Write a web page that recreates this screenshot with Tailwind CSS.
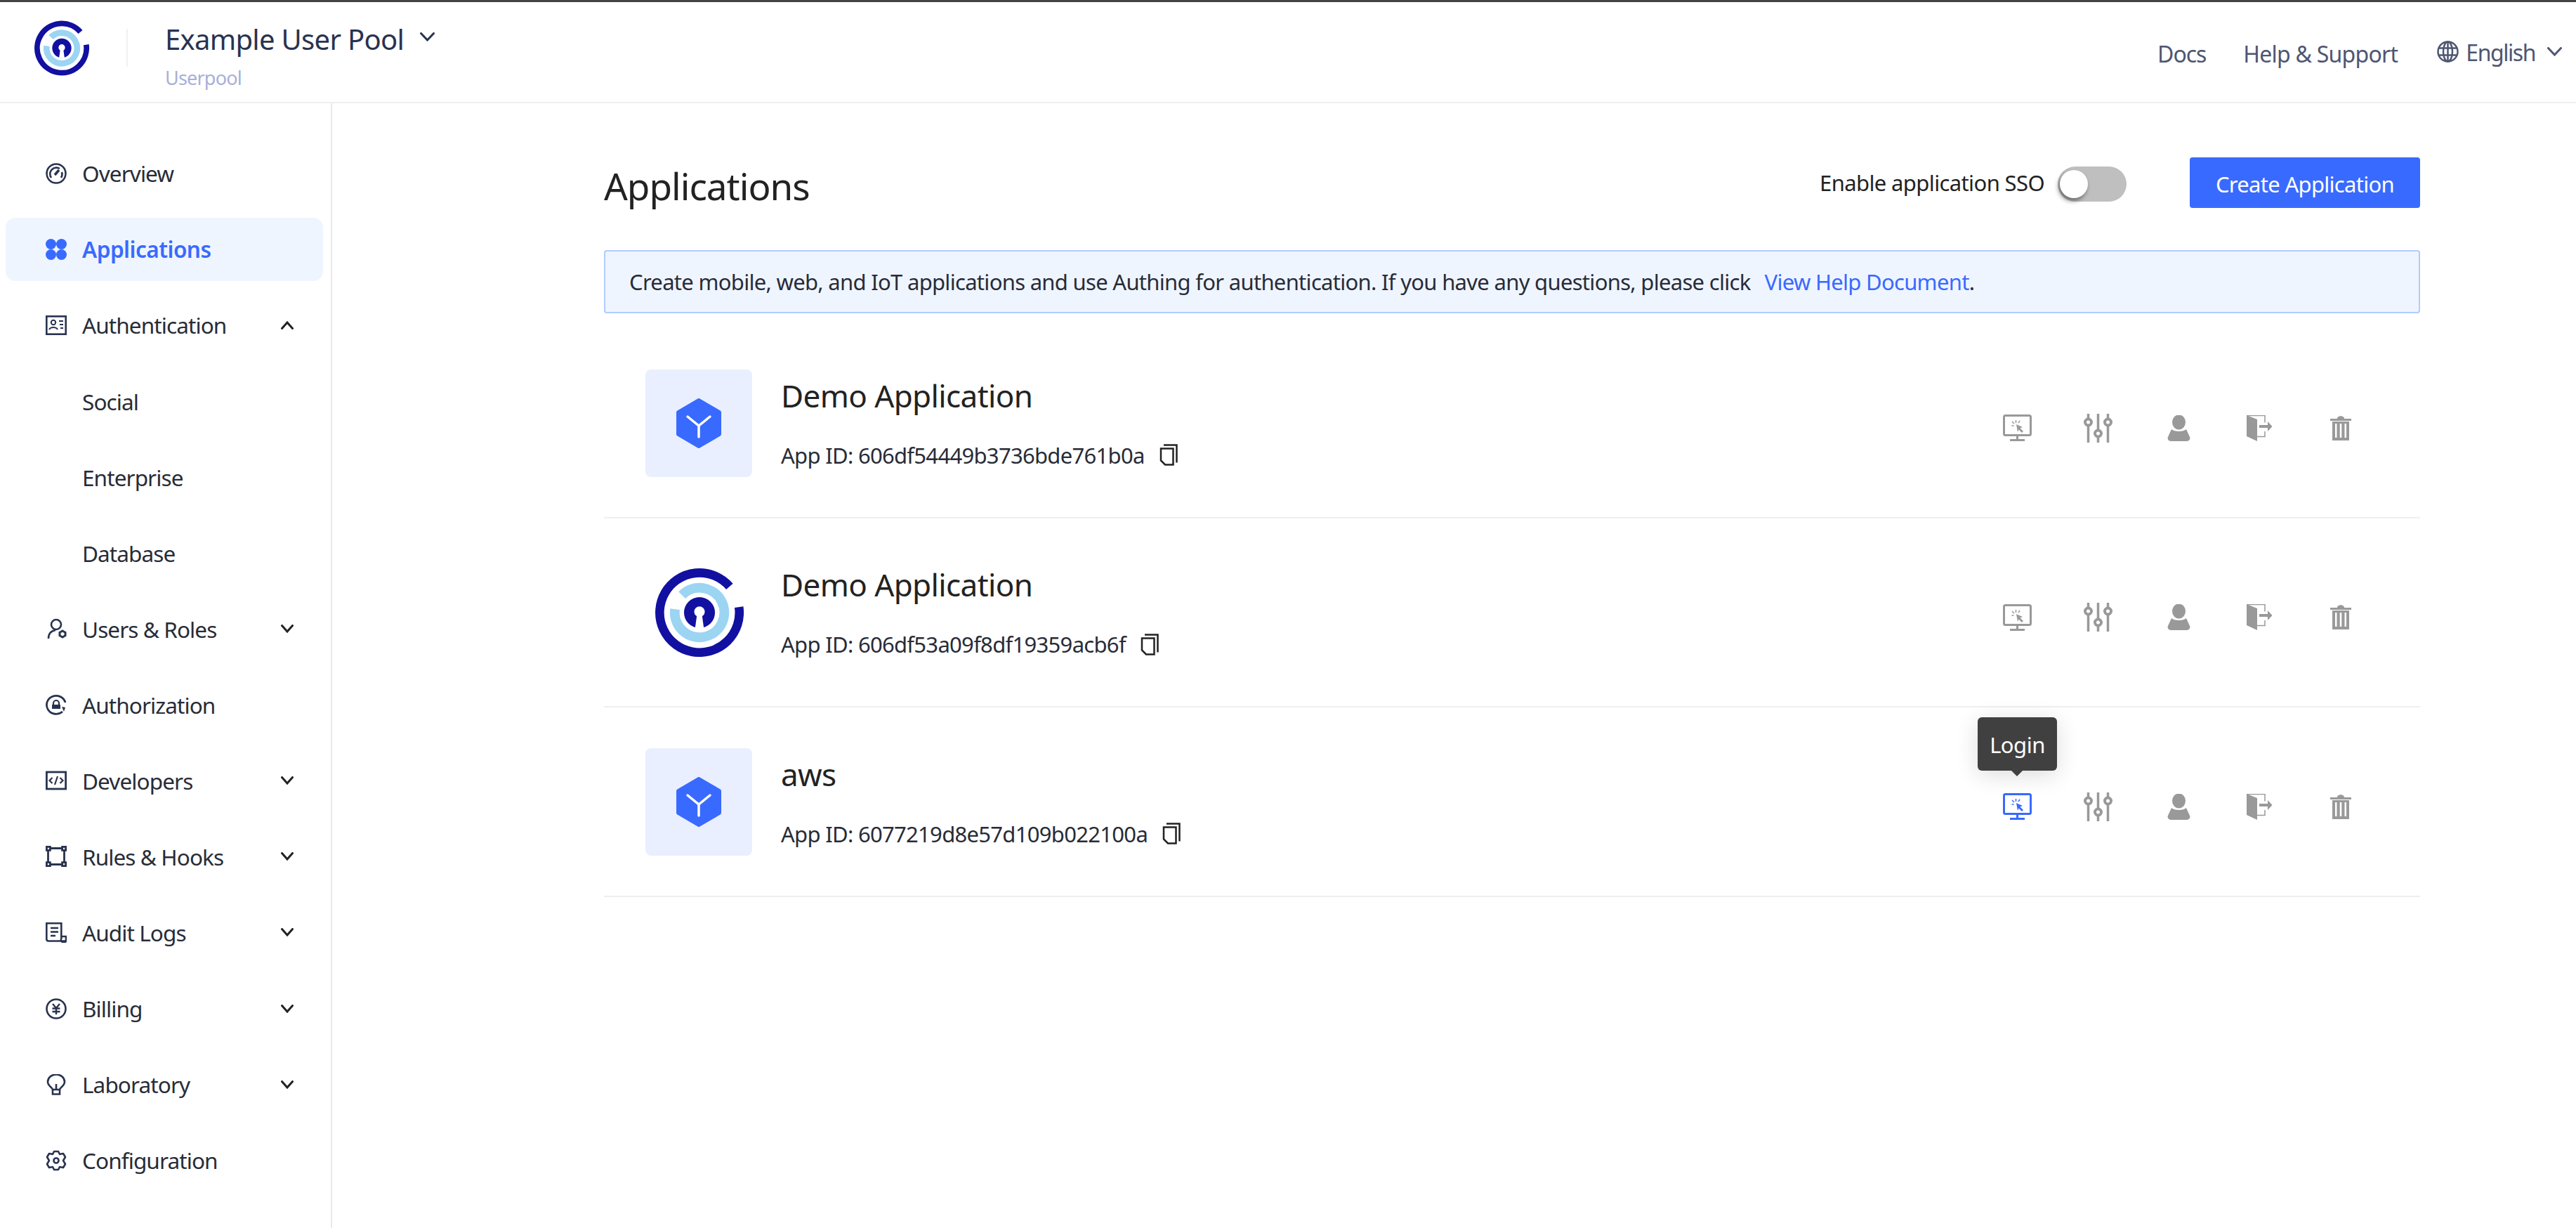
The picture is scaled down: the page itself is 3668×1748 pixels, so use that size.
<!DOCTYPE html>
<html lang="en"><head><meta charset="utf-8">
<script src="https://cdn.jsdelivr.net/npm/@tailwindcss/browser@4"></script>
<title>Applications</title></head>
<body class="bg-white">
<div class="w-[3668px] h-[1748px] flex flex-col overflow-hidden font-['Noto_Sans','Open_Sans',sans-serif] font-[380] text-[#282c37] border-t-[3px] border-[#444]">
  <header class="h-[144px] shrink-0 border-b-[2px] border-[#efefef] flex items-center">
    <svg class="ml-[49px] w-[78px] h-[79px] mt-[-12px] shrink-0" viewBox="0 0 100 100" fill="none"><path d="M84 20.5A45 45 0 1 0 94.6 43.7" stroke="#1210a0" stroke-width="10"/><path d="M30.2 30.2A28 28 0 1 1 22.3 46.1" stroke="#9bd5f2" stroke-width="11"/><circle cx="50" cy="50" r="17.5" fill="#1210a0"/><circle cx="50" cy="49" r="6" fill="#fff"/><path d="M47.5 50h5L55 68H45z" fill="#fff"/></svg>
    <div class="w-[2px] h-[54px] bg-[#f1f1f1] ml-[53px] mt-[-12px]"></div>
    <div class="ml-[53px] flex flex-col mt-[9px]">
      <div class="flex items-center h-[58px]"><span class="text-[40px] leading-[58px] tracking-[-0.7px] text-[#293350]">Example User Pool</span>
        <svg class="ml-[23px] mt-[-8px] w-[21px] h-[13px]" viewBox="0 0 21 13" fill="none"><path d="M1.5 1.5l9 9.5 9-9.5" stroke="#293350" stroke-width="3" stroke-linecap="round"/></svg></div>
      <span class="mt-[7px] text-[27px] leading-[38px] tracking-[-0.8px] text-[#a7b0d8]">Userpool</span>
    </div>
    <div class="ml-auto flex items-center mt-[6px] text-[32px] text-[#4e5672]">
      <span class="tracking-[-1.06px]">Docs</span>
      <span class="ml-[53px] tracking-[-0.75px]">Help &amp; Support</span>
      <svg class="ml-[56px] w-[31px] h-[31px] mt-[-8px]" viewBox="0 0 31 31" fill="none" stroke="#4e5672" stroke-width="2.5"><circle cx="15.5" cy="15.5" r="14"/><ellipse cx="15.5" cy="15.5" rx="6.5" ry="14"/><path d="M2 10.5h27M2 20.5h27M15.5 1.5v28"/></svg>
      <span class="ml-[10px] tracking-[-1.46px] mt-[-4px]">English</span>
      <svg class="ml-[17px] mr-[20px] w-[21px] h-[13px] mt-[-8px]" viewBox="0 0 21 13" fill="none"><path d="M1.5 1.5l9 9.5 9-9.5" stroke="#4e5672" stroke-width="3" stroke-linecap="round"/></svg>
    </div>
  </header>
  <div class="flex flex-1 min-h-0">
    <nav class="w-[473px] shrink-0 border-r-[2px] border-[#e8e9f0] pt-[55px] pl-[8px] pr-[11px] text-[31.5px] tracking-[-0.9px]">
      <a class="flex items-center h-[90px] mb-[18.05px] pl-[57px]"><svg class="w-[30px] h-[30px] shrink-0" viewBox="0 0 30 30" fill="none" stroke="#293350" stroke-width="2.6"><circle cx="15" cy="15" r="13.5"/><path d="M8 21a9 9 0 0 1 12-13"/><path d="M23 13a9 9 0 0 1-1 8"/><path d="M13 17l6-7" stroke-width="3.5"/></svg><span class="ml-[22px]">Overview</span></a>
      <a class="flex items-center h-[90px] mb-[18.05px] pl-[57px] rounded-[14px] bg-[#eff5ff] text-[#396aff] font-semibold tracking-[-0.5px]"><svg class="w-[30px] h-[30px] shrink-0" viewBox="0 0 30 30" fill="#396aff"><ellipse cx="7.5" cy="7.5" rx="7.5" ry="7.5"/><ellipse cx="22.5" cy="7.5" rx="7.5" ry="7.5"/><ellipse cx="7.5" cy="22.5" rx="7.5" ry="7.5"/><ellipse cx="22.5" cy="22.5" rx="7.5" ry="7.5"/></svg><span class="ml-[22px]">Applications</span></a>
      <a class="flex items-center h-[90px] mb-[18.05px] pl-[57px]"><svg class="w-[30px] h-[30px] shrink-0" viewBox="0 0 30 30" fill="none" stroke="#293350" stroke-width="2.6"><rect x="1.3" y="2.3" width="27.4" height="25.4"/><circle cx="11" cy="11" r="3.2" stroke-width="2"/><path d="M5 21c2-4 10-4 12 0M19 9h6M20 14h5M21 19h4" stroke-width="2"/></svg><span class="ml-[22px]">Authentication</span><svg class="ml-auto mr-[42px] w-[18px] h-[12px]" viewBox="0 0 18 12" fill="none"><path d="M1.5 10.5L9 2l7.5 8.5" stroke="#222" stroke-width="3" stroke-linecap="round"/></svg></a>
      <a class="flex items-center h-[90px] mb-[18.05px] pl-[109px]">Social</a>
      <a class="flex items-center h-[90px] mb-[18.05px] pl-[109px]">Enterprise</a>
      <a class="flex items-center h-[90px] mb-[18.05px] pl-[109px]">Database</a>
      <a class="flex items-center h-[90px] mb-[18.05px] pl-[57px]"><svg class="w-[30px] h-[30px] shrink-0" viewBox="0 0 30 30" fill="none" stroke="#293350" stroke-width="2.6"><circle cx="15" cy="9" r="7"/><path d="M4 29c0-7 4-11 10-12"/><path d="M24 18l4 2.3v4.4L24 27l-4-2.3v-4.4z" stroke-width="3"/></svg><span class="ml-[22px]">Users &amp; Roles</span><svg class="ml-auto mr-[42px] w-[18px] h-[12px]" viewBox="0 0 18 12" fill="none"><path d="M1.5 1.5L9 10l7.5-8.5" stroke="#222" stroke-width="3" stroke-linecap="round"/></svg></a>
      <a class="flex items-center h-[90px] mb-[18.05px] pl-[57px]"><svg class="w-[30px] h-[30px] shrink-0" viewBox="0 0 30 30" fill="none" stroke="#293350" stroke-width="2.8"><path d="M28 12A13.5 13 0 1 0 24 25"/><path d="M11 15v-2a4 4 0 0 1 8 0v2" stroke-width="2.2"/><rect x="9" y="15" width="12" height="6" fill="#293350" stroke="none"/><path d="M23 18l5 1-2 6z" fill="#293350" stroke="none"/></svg><span class="ml-[22px]">Authorization</span></a>
      <a class="flex items-center h-[90px] mb-[18.05px] pl-[57px]"><svg class="w-[30px] h-[30px] shrink-0" viewBox="0 0 30 30" fill="none" stroke="#293350" stroke-width="2.8"><rect x="1.4" y="3" width="27.2" height="24"/><path d="M9.5 11L5.5 15l4 4M20.5 11l4 4-4 4M17 9l-4 12" stroke-width="2.2"/></svg><span class="ml-[22px]">Developers</span><svg class="ml-auto mr-[42px] w-[18px] h-[12px]" viewBox="0 0 18 12" fill="none"><path d="M1.5 1.5L9 10l7.5-8.5" stroke="#222" stroke-width="3" stroke-linecap="round"/></svg></a>
      <a class="flex items-center h-[90px] mb-[18.05px] pl-[57px]"><svg class="w-[30px] h-[30px] shrink-0" viewBox="0 0 30 30" fill="none" stroke="#293350" stroke-width="2.8"><path d="M3.5 7v16M26.5 7v16M7 3.5h16M7 26.5h16"/><rect x="1.4" y="1.4" width="5" height="5"/><rect x="23.6" y="1.4" width="5" height="5"/><rect x="1.4" y="23.6" width="5" height="5"/><rect x="23.6" y="23.6" width="5" height="5"/></svg><span class="ml-[22px]">Rules &amp; Hooks</span><svg class="ml-auto mr-[42px] w-[18px] h-[12px]" viewBox="0 0 18 12" fill="none"><path d="M1.5 1.5L9 10l7.5-8.5" stroke="#222" stroke-width="3" stroke-linecap="round"/></svg></a>
      <a class="flex items-center h-[90px] mb-[18.05px] pl-[57px]"><svg class="w-[30px] h-[30px] shrink-0" viewBox="0 0 30 30" fill="none" stroke="#293350" stroke-width="2.6"><path d="M29 27.5H4a2.7 2.7 0 0 1-2.7-2.7V2.3h21V24a3.5 3.5 0 0 0 6.7 3.5V21h-6.7"/><path d="M7 9h11M7 14.5h11M7 20h7"/></svg><span class="ml-[22px]">Audit Logs</span><svg class="ml-auto mr-[42px] w-[18px] h-[12px]" viewBox="0 0 18 12" fill="none"><path d="M1.5 1.5L9 10l7.5-8.5" stroke="#222" stroke-width="3" stroke-linecap="round"/></svg></a>
      <a class="flex items-center h-[90px] mb-[18.05px] pl-[57px]"><svg class="w-[30px] h-[30px] shrink-0" viewBox="0 0 30 30" fill="none" stroke="#293350" stroke-width="2.6"><circle cx="15" cy="15" r="13.5"/><path d="M10 8l5 6 5-6M9.5 14.5h11M9.5 19h11M15 14v9" stroke-width="2.4"/></svg><span class="ml-[22px]">Billing</span><svg class="ml-auto mr-[42px] w-[18px] h-[12px]" viewBox="0 0 18 12" fill="none"><path d="M1.5 1.5L9 10l7.5-8.5" stroke="#222" stroke-width="3" stroke-linecap="round"/></svg></a>
      <a class="flex items-center h-[90px] mb-[18.05px] pl-[57px]"><svg class="w-[30px] h-[30px] shrink-0" viewBox="0 0 30 30" fill="none" stroke="#293350" stroke-width="2.6"><path d="M10 22c0-3-7-5-7-11a12 10.500 0 0 1 24 0c0 6-7 8-7 11z"/><path d="M10 22v6.500h10V22M15 14v8"/></svg><span class="ml-[22px]">Laboratory</span><svg class="ml-auto mr-[42px] w-[18px] h-[12px]" viewBox="0 0 18 12" fill="none"><path d="M1.500 1.500L9 10l7.500-8.500" stroke="#222" stroke-width="3" stroke-linecap="round"/></svg></a>
      <a class="flex items-center h-[90px] pl-[57px]"><svg class="w-[30px] h-[30px] shrink-0" viewBox="0 0 30 30" fill="none" stroke="#293350" stroke-width="2.600"><path d="M12 2l6 0 2 4 5-1 3 5-3 5 3 5-3 5-5-1-2 4h-6l-2-4-5 1-3-5 3-5-3-5 3-5 5 1z" stroke-linejoin="round"/><circle cx="15" cy="15" r="3.500"/></svg><span class="ml-[22px]">Configuration</span></a>
    </nav>
    <main class="flex-1 min-w-0 pl-[387px] pr-[222px]">
      <div class="flex items-center h-[72px] mt-[77px]">
        <h1 class="text-[53px] font-[380] tracking-[-1px] text-[#222] mt-[10px]">Applications</h1>
        <span class="ml-auto text-[31px] tracking-[-0.62px] text-[#222]">Enable application SSO</span>
        <span class="ml-[19px] relative w-[98px] h-[50px] rounded-full bg-[#bfbfbf] mt-[4px]"><span class="absolute left-[3px] top-[5px] w-[40px] h-[40px] rounded-full bg-white shadow-[-2px_4px_6px_rgba(0,0,0,0.45)]"></span></span>
        <button class="ml-[90px] w-[328px] h-[72px] pt-[4px] rounded-[4px] bg-[#396aff] text-white text-[31px] tracking-[-0.7px]">Create Application</button>
      </div>
      <div class="mt-[60px] h-[90px] border-[2px] border-[#b0ccff] rounded-[4px] bg-[#eff5ff] flex items-center pl-[34px] text-[31px] tracking-[-0.7px] text-[#282c37]">
        <span>Create mobile, web, and IoT applications and use Authing for authentication. If you have any questions, please click</span>
        <a class="ml-[20px] text-[#396aff] tracking-[-0.7px]">View Help Document</a><span>.</span>
      </div>
      <div class="mt-[22px]">
        <section class="h-[270px] border-b-[2px] border-[#efefef] flex items-center pl-[59px]">
          <div class="w-[152px] h-[153px] rounded-[8px] bg-[#e9effe] flex items-center justify-center shrink-0"><svg class="w-[64px] h-[71px]" viewBox="0 0 64 71"><path d="M32 3L61 20v31L32 68 3 51V20z" fill="#396aff" stroke="#396aff" stroke-width="6" stroke-linejoin="round"/><path d="M16 26l16 13 16-13M32 39v16" stroke="#fff" stroke-width="3.500" stroke-linecap="round" fill="none"/></svg></div>
          <div class="ml-[41px]">
            <div class="text-[44px] leading-[60px] tracking-[-0.6px] text-[#222] mt-[-2px]">Demo Application</div>
            <div class="mt-[33px] flex items-center text-[31px] leading-[44px] tracking-[-0.7px]"><span>App ID: 606df54449b3736bde761b0a</span><svg class="ml-[21px] w-[26px] h-[31px]" viewBox="0 0 26 31" fill="none" stroke="#222" stroke-width="2.500"><path d="M6 1.500h18.500v25"/><path d="M2 6.500h17.500v23H8L2 23.500z"/></svg></div>
          </div>
          <div class="ml-auto mr-[56px] flex items-center mt-[14px]">
            <span class="w-[115px] flex justify-center"><svg class="w-[41px] h-[38px]" viewBox="0 0 41 38" fill="none" stroke="#999"><rect x="1.500" y="1.500" width="38" height="28" rx="2" stroke-width="3"/><path d="M20.500 30v5M10 36.500h21" stroke-width="3"/><path d="M19 14l9 4-3.500 1.500L29 24l-2 2-4.500-4.500L21 25z" fill="#999" stroke="none"/><path d="M18.500 8v4M13 10l3 3M12.500 16h3M24 9l-2 3" stroke-width="1.500"/></svg></span>
            <span class="w-[115px] flex justify-center"><svg class="w-[41px] h-[41px]" viewBox="0 0 41 41" fill="none" stroke="#999" stroke-width="3.500"><path d="M6.500 0v41M20.500 0v41M34.500 0v41"/><circle cx="6.500" cy="12" r="4.500" fill="#fff" stroke-width="4"/><circle cx="20.500" cy="28" r="4.500" fill="#fff" stroke-width="4"/><circle cx="34.500" cy="12" r="4.500" fill="#fff" stroke-width="4"/></svg></span>
            <span class="w-[115px] flex justify-center"><svg class="w-[33px] h-[37px]" viewBox="0 0 33 37" fill="#999"><ellipse cx="16.500" cy="10" rx="9.500" ry="10.500"/><path d="M6 20c4 4 17 4 21 0l5 11c1.500 3-1 6-4 6H5c-3 0-5.500-3-4-6z"/></svg></span>
            <span class="w-[115px] flex justify-center"><svg class="w-[37px] h-[37px]" viewBox="0 0 37 37" fill="#999"><path d="M0 0l15 6v31L0 30z"/><path d="M0 .5h26v10M26 23v7.500H15" fill="none" stroke="#999" stroke-width="1.500"/><path d="M18 14h12V9l6.500 7-6.500 7v-5H18z"/></svg></span>
            <span class="w-[115px] flex justify-center"><svg class="w-[32px] h-[35px]" viewBox="0 0 32 35" fill="#999"><path d="M11 4c0-5 10-5 10 0h10v3H1V4z"/><path d="M4 8h24v27H4z"/><path d="M8 11h2.500v20H8zM14.700 11h2.600v20h-2.600zM21.500 11H24v20h-2.500z" fill="#fff"/></svg></span>
          </div>
        </section>
        <section class="h-[269px] border-b-[2px] border-[#efefef] flex items-center pl-[59px]">
          <div class="w-[152px] h-[153px] flex items-center justify-center shrink-0 pl-[2px]"><svg class="w-[126px] h-[126px]" viewBox="0 0 100 100" fill="none"><path d="M84 20.500A45 45 0 1 0 94.600 43.700" stroke="#1210a0" stroke-width="10"/><path d="M30.200 30.200A28 28 0 1 1 22.300 46.100" stroke="#9bd5f2" stroke-width="11"/><circle cx="50" cy="50" r="17.500" fill="#1210a0"/><circle cx="50" cy="49" r="6" fill="#fff"/><path d="M47.500 50h5L55 68H45z" fill="#fff"/></svg></div>
          <div class="ml-[41px]">
            <div class="text-[44px] leading-[60px] tracking-[-0.6px] text-[#222] mt-[-2px]">Demo Application</div>
            <div class="mt-[33px] flex items-center text-[31px] leading-[44px] tracking-[-0.7px]"><span>App ID: 606df53a09f8df19359acb6f</span><svg class="ml-[21px] w-[26px] h-[31px]" viewBox="0 0 26 31" fill="none" stroke="#222" stroke-width="2.500"><path d="M6 1.500h18.500v25"/><path d="M2 6.500h17.500v23H8L2 23.500z"/></svg></div>
          </div>
          <div class="ml-auto mr-[56px] flex items-center mt-[14px]">
            <span class="w-[115px] flex justify-center"><svg class="w-[41px] h-[38px]" viewBox="0 0 41 38" fill="none" stroke="#999"><rect x="1.500" y="1.500" width="38" height="28" rx="2" stroke-width="3"/><path d="M20.500 30v5M10 36.500h21" stroke-width="3"/><path d="M19 14l9 4-3.500 1.500L29 24l-2 2-4.500-4.500L21 25z" fill="#999" stroke="none"/><path d="M18.500 8v4M13 10l3 3M12.500 16h3M24 9l-2 3" stroke-width="1.500"/></svg></span>
            <span class="w-[115px] flex justify-center"><svg class="w-[41px] h-[41px]" viewBox="0 0 41 41" fill="none" stroke="#999" stroke-width="3.500"><path d="M6.500 0v41M20.500 0v41M34.500 0v41"/><circle cx="6.500" cy="12" r="4.500" fill="#fff" stroke-width="4"/><circle cx="20.500" cy="28" r="4.500" fill="#fff" stroke-width="4"/><circle cx="34.500" cy="12" r="4.500" fill="#fff" stroke-width="4"/></svg></span>
            <span class="w-[115px] flex justify-center"><svg class="w-[33px] h-[37px]" viewBox="0 0 33 37" fill="#999"><ellipse cx="16.500" cy="10" rx="9.500" ry="10.500"/><path d="M6 20c4 4 17 4 21 0l5 11c1.500 3-1 6-4 6H5c-3 0-5.500-3-4-6z"/></svg></span>
            <span class="w-[115px] flex justify-center"><svg class="w-[37px] h-[37px]" viewBox="0 0 37 37" fill="#999"><path d="M0 0l15 6v31L0 30z"/><path d="M0 .5h26v10M26 23v7.500H15" fill="none" stroke="#999" stroke-width="1.500"/><path d="M18 14h12V9l6.500 7-6.500 7v-5H18z"/></svg></span>
            <span class="w-[115px] flex justify-center"><svg class="w-[32px] h-[35px]" viewBox="0 0 32 35" fill="#999"><path d="M11 4c0-5 10-5 10 0h10v3H1V4z"/><path d="M4 8h24v27H4z"/><path d="M8 11h2.500v20H8zM14.700 11h2.600v20h-2.600zM21.500 11H24v20h-2.500z" fill="#fff"/></svg></span>
          </div>
        </section>
        <section class="h-[270px] border-b-[2px] border-[#efefef] flex items-center pl-[59px]">
          <div class="w-[152px] h-[153px] rounded-[8px] bg-[#e9effe] flex items-center justify-center shrink-0"><svg class="w-[64px] h-[71px]" viewBox="0 0 64 71"><path d="M32 3L61 20v31L32 68 3 51V20z" fill="#396aff" stroke="#396aff" stroke-width="6" stroke-linejoin="round"/><path d="M16 26l16 13 16-13M32 39v16" stroke="#fff" stroke-width="3.500" stroke-linecap="round" fill="none"/></svg></div>
          <div class="ml-[41px]">
            <div class="text-[44px] leading-[60px] tracking-[-0.6px] text-[#222] mt-[-2px]">aws</div>
            <div class="mt-[33px] flex items-center text-[31px] leading-[44px] tracking-[-0.7px]"><span>App ID: 6077219d8e57d109b022100a</span><svg class="ml-[21px] w-[26px] h-[31px]" viewBox="0 0 26 31" fill="none" stroke="#222" stroke-width="2.500"><path d="M6 1.500h18.500v25"/><path d="M2 6.500h17.500v23H8L2 23.500z"/></svg></div>
          </div>
          <div class="ml-auto mr-[56px] flex items-center mt-[14px]">
            <span class="relative w-[115px] flex justify-center"><span class="absolute left-[1px] bottom-[70px] w-[113px] h-[76px] pt-[2px] rounded-[6px] bg-[#404040] text-white text-[31px] tracking-[-0.5px] flex items-center justify-center shadow-[0_6px_32px_rgba(0,0,0,0.14)]">Login<span class="absolute left-[48px] bottom-[-8px] w-0 h-0 border-x-[8px] border-x-transparent border-t-[8px] border-t-[#404040]"></span></span><svg class="w-[41px] h-[38px]" viewBox="0 0 41 38" fill="none" stroke="#396aff"><rect x="1.500" y="1.500" width="38" height="28" rx="2" stroke-width="3"/><path d="M20.500 30v5M10 36.500h21" stroke-width="3"/><path d="M19 14l9 4-3.500 1.500L29 24l-2 2-4.500-4.500L21 25z" fill="#396aff" stroke="none"/><path d="M18.500 8v4M13 10l3 3M12.500 16h3M24 9l-2 3" stroke-width="1.500"/></svg></span>
            <span class="w-[115px] flex justify-center"><svg class="w-[41px] h-[41px]" viewBox="0 0 41 41" fill="none" stroke="#999" stroke-width="3.500"><path d="M6.500 0v41M20.500 0v41M34.500 0v41"/><circle cx="6.500" cy="12" r="4.500" fill="#fff" stroke-width="4"/><circle cx="20.500" cy="28" r="4.500" fill="#fff" stroke-width="4"/><circle cx="34.500" cy="12" r="4.500" fill="#fff" stroke-width="4"/></svg></span>
            <span class="w-[115px] flex justify-center"><svg class="w-[33px] h-[37px]" viewBox="0 0 33 37" fill="#999"><ellipse cx="16.500" cy="10" rx="9.500" ry="10.500"/><path d="M6 20c4 4 17 4 21 0l5 11c1.500 3-1 6-4 6H5c-3 0-5.500-3-4-6z"/></svg></span>
            <span class="w-[115px] flex justify-center"><svg class="w-[37px] h-[37px]" viewBox="0 0 37 37" fill="#999"><path d="M0 0l15 6v31L0 30z"/><path d="M0 .5h26v10M26 23v7.500H15" fill="none" stroke="#999" stroke-width="1.500"/><path d="M18 14h12V9l6.500 7-6.500 7v-5H18z"/></svg></span>
            <span class="w-[115px] flex justify-center"><svg class="w-[32px] h-[35px]" viewBox="0 0 32 35" fill="#999"><path d="M11 4c0-5 10-5 10 0h10v3H1V4z"/><path d="M4 8h24v27H4z"/><path d="M8 11h2.500v20H8zM14.700 11h2.600v20h-2.600zM21.500 11H24v20h-2.500z" fill="#fff"/></svg></span>
          </div>
        </section>
      </div>
    </main>
  </div>
</div>
</body></html>
